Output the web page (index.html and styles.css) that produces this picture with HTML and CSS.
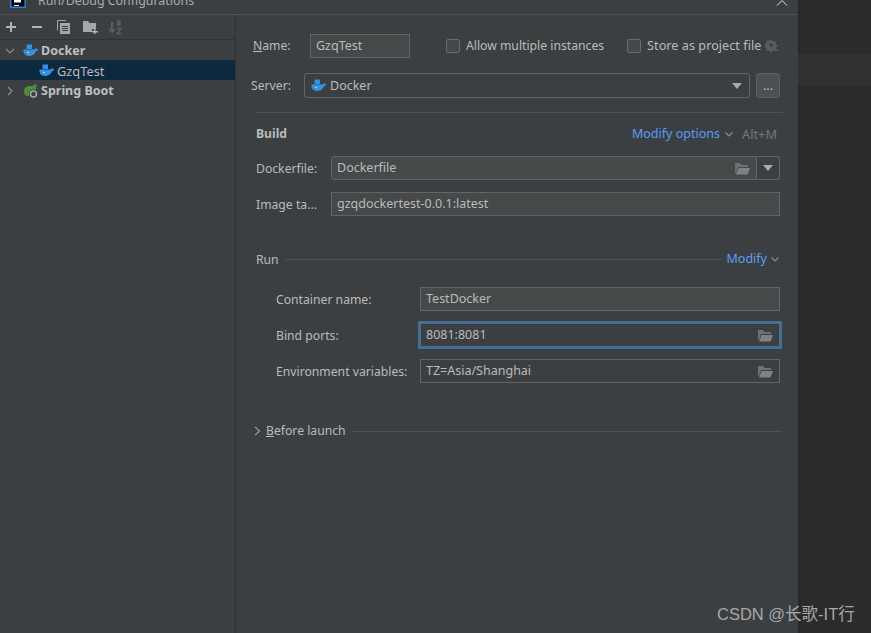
FILE: index.html
```html
<!DOCTYPE html>
<html lang="en">
<head>
<meta charset="utf-8">
<title>Run/Debug Configurations</title>
<link rel="stylesheet" href="styles.css">
</head>
<body>
<svg class="defs" width="0" height="0">
  <symbol id="docker" viewBox="0 0 16 16">
    <path fill="#3592e0" d="M3.500 1.500H9v4.500H3.500z"/>
    <path fill="#3592e0" d="M.5 6.500h11.200c.3-.9 1.100-1.300 1.800-1.100.2.500.5.900 2 .9-.4 1.300-1.300 1.800-2.500 1.800-.9 2.900-3.300 4.900-6.300 4.900C3 13 0 11 .5 6.500z"/>
    <circle cx="5" cy="9.500" r=".8" fill="#c9e2f6"/>
  </symbol>
  <symbol id="folder" viewBox="0 0 16 13">
    <path fill="#6e7072" d="M1 1h5l1.500 2H14v2H4L2 11H1z"/>
    <path fill="#7f8284" d="M4.500 6H16l-2.500 6.500H2z"/>
  </symbol>
</svg>
<div class="dialog">
  <header class="titlebar">
    <svg class="app-logo" width="16" height="8" viewBox="0 0 16 8"><path fill="#000" d="M0 0h16v8H0z"/><path fill="none" stroke="#2f80ed" stroke-width="1.500" d="M.8 0v7.300h14.400V0"/><path fill="#fff" d="M4 0h7v2.500H4zM4 5h5v1H4z"/></svg>
    <span class="title">Run/Debug Configurations</span>
    <svg class="close" width="12" height="6" viewBox="0 0 12 6"><path fill="none" stroke="#e6e6e6" d="M1 5.500 6 .5l5 5"/></svg>
  </header>
  <div class="main">
    <aside class="sidebar">
      <div class="toolbar">
        <svg class="tool tool-add" width="12" height="12" viewBox="0 0 12 12"><path fill="#b0b2b4" d="M5 1h2v4h4v2H7v4H5V7H1V5h4z"/></svg>
        <svg class="tool tool-add" width="12" height="12" viewBox="0 0 12 12"><path fill="#b0b2b4" d="M1 5h10v2H1z"/></svg>
        <svg class="tool" width="13" height="14" viewBox="0 0 13 14"><path fill="none" stroke="#a4a6a8" d="M9 .5H.5v10"/><path fill="#a4a6a8" d="M3 3h10v11H3z"/><path fill="#3c3f41" d="M5 6h6v1H5zM5 8h6v1H5zM5 10h6v1H5z"/></svg>
        <svg class="tool tool-folder" width="15" height="14" viewBox="0 0 15 14"><path fill="#a4a6a8" d="M0 1h5l1.500 2H13v6H9v3H0z"/><path fill="#b0b2b4" d="M11 9h1.500v2H15v1.500h-2.500V14H11v-1.500H9V11h2z"/></svg>
        <svg class="tool" width="14" height="15" viewBox="0 0 14 15"><path fill="#5c5f61" d="M3 2h2v8l2-2v2l-3 3.500L1 10V8l2 2z"/><path fill="none" stroke="#5c5f61" stroke-width="1.300" d="M9 1h3v4H9.500V3H12M9 8.500h4L9 13.500h4"/></svg>
      </div>
      <ul class="tree">
        <li class="node">
          <svg class="arrow" width="10" height="10" viewBox="0 0 10 10"><path fill="none" stroke="#8b8d8f" stroke-width="1.200" d="M1 3l4 4 4-4"/></svg>
          <svg class="node-icon" width="16" height="16"><use href="#docker"/></svg>
          <span class="node-bold">Docker</span>
        </li>
        <li class="node selected">
          <svg class="node-icon" width="16" height="16"><use href="#docker"/></svg>
          <span class="node-name">GzqTest</span>
        </li>
        <li class="node">
          <svg class="arrow" width="10" height="10" viewBox="0 0 10 10"><path fill="none" stroke="#8b8d8f" stroke-width="1.200" d="M3 1l4 4-4 4"/></svg>
          <svg class="node-icon" width="16" height="16" viewBox="0 0 16 16"><path fill="#4e8b3a" d="M1 8c0-3 2.500-5 6-5 2.500 0 4-.5 6-2.500 1 3 .5 6-1 8L6 13H3C1.800 12 1 10 1 8z"/><circle cx="10.500" cy="11" r="4.500" fill="#3c3f41"/><circle cx="10.500" cy="11" r="3" fill="none" stroke="#a8aaac" stroke-width="1.500"/></svg>
          <span class="node-bold">Spring Boot</span>
        </li>
      </ul>
    </aside>
    <section class="config">
      <div class="row row-name">
        <label class="lbl lbl-name"><u>N</u>ame:</label>
        <div class="field name-field">GzqTest</div>
        <label class="check check-multi"><span class="box"></span>Allow multiple instances</label>
        <label class="check check-store"><span class="box"></span>Store as project file</label>
        <svg class="gear" width="16" height="16" viewBox="0 0 16 16"><path transform="translate(0 1) scale(.75)" fill="#5a5d5f" fill-rule="evenodd" d="M6.500 1h3l.4 2 1.300.6 1.800-1.100 2 2-1.100 1.800.6 1.300 2 .4v2.800l-2 .4-.6 1.300 1.100 1.800-2 2-1.800-1.100-1.300.6-.4 2h-3l-.4-2-1.300-.6-1.800 1.100-2-2 1.100-1.800-.6-1.300-2-.4V6.800l2-.4.6-1.300L2 3.300l2-2 1.800 1.100L7.100 3zM8 5.500a2.500 2.500 0 1 0 0 5 2.500 2.500 0 0 0 0-5z"/><path fill="#5a5d5f" d="M9 11.500h5l-2.500 2z"/></svg>
      </div>
      <div class="row row-server">
        <label class="lbl lbl-server">Server:</label>
        <div class="combo">
          <svg class="combo-icon" width="16" height="16"><use href="#docker"/></svg>
          <span class="grow">Docker</span>
          <span class="caret"></span>
        </div>
        <div class="more">...</div>
      </div>
      <div class="divider"></div>
      <div class="head head-build">
        <span class="strong grow">Build</span>
        <a class="link">Modify options</a>
        <svg class="chev" width="8" height="5" viewBox="0 0 8 5"><path fill="none" stroke="#8b8d8f" stroke-width="1.200" d="M.5.500 4 4 7.500.500"/></svg>
        <span class="hint">Alt+M</span>
      </div>
      <div class="row row-docker">
        <label class="lbl lbl-build">Dockerfile:</label>
        <div class="split">
          <div class="field split-main rounded-left"><span class="grow">Dockerfile</span><svg class="folder" width="16" height="13"><use href="#folder"/></svg></div>
          <div class="split-btn"><span class="caret"></span></div>
        </div>
      </div>
      <div class="row row-tag">
        <label class="lbl lbl-build">Image ta...</label>
        <div class="field grow">gzqdockertest-0.0.1:latest</div>
      </div>
      <div class="head head-run">
        <span class="run-label">Run</span>
        <span class="rule"></span>
        <a class="link">Modify</a>
        <svg class="chev chev-run" width="8" height="5" viewBox="0 0 8 5"><path fill="none" stroke="#8b8d8f" stroke-width="1.200" d="M.5.500 4 4 7.500.500"/></svg>
      </div>
      <div class="row row-run row-container">
        <label class="lbl lbl-run">Container name:</label>
        <div class="field grow">TestDocker</div>
      </div>
      <div class="row row-run">
        <label class="lbl lbl-run">Bind ports:</label>
        <div class="field grow focused"><span class="grow">8081:8081</span><svg class="folder" width="16" height="13"><use href="#folder"/></svg></div>
      </div>
      <div class="row row-run">
        <label class="lbl lbl-run">Environment variables:</label>
        <div class="field grow plain"><span class="grow">TZ=Asia/Shanghai</span><svg class="folder" width="16" height="13"><use href="#folder"/></svg></div>
      </div>
      <div class="head head-before">
        <svg class="before-arrow" width="7" height="10" viewBox="0 0 7 10"><path fill="none" stroke="#a0a2a4" stroke-width="1.100" d="M1 .8 5.500 5 1 9.200"/></svg>
        <span class="before-label"><u>B</u>efore launch</span>
        <span class="rule"></span>
      </div>
    </section>
  </div>
</div>
<div class="backdrop"><div class="band"></div></div>
<div class="watermark">CSDN @长歌-IT行</div>
</body>
</html>
```
FILE: styles.css
```css
* { box-sizing: border-box; }
html, body { height: 100%; }
body {
  margin: 0;
  display: flex;
  overflow: hidden;
  background: #2b2b2b;
  color: #bbbbbb;
  font-family: "Noto Sans", "Noto Sans CJK SC", sans-serif;
  font-size: 12.5px;
  line-height: 16px;
}
.defs { position: absolute; }
.dialog {
  width: 798px;
  height: 633px;
  flex: none;
  display: flex;
  flex-direction: column;
  background: #3c3f41;
  box-shadow: 1px 0 2px #262626;
}
.titlebar {
  height: 15px;
  flex: none;
  display: flex;
  align-items: flex-end;
  overflow: hidden;
  border-bottom: 1px solid #515151;
  position: relative;
  padding-left: 10px;
}
.app-logo { position: absolute; left: 10px; top: 0; }
.title { margin-left: 28px; margin-bottom: 3px; line-height: 20px; font-size: 12.4px; color: #a9abad; }
.close { position: absolute; left: 776px; top: 0; }
.main { flex: 1; display: flex; min-height: 0; }
.sidebar { width: 236px; flex: none; border-right: 1px solid #323232; }
.toolbar {
  height: 25px;
  display: flex;
  align-items: center;
  padding-left: 5px;
  border-bottom: 1px solid #323232;
}
.tool { margin-right: 13px; }
.tool-add { margin-right: 14px; }
.tool-folder { margin-right: 10px; }
.tree { list-style: none; margin: 0; padding: 0; }
.node { height: 20px; display: flex; align-items: center; padding: 2px 0 0 5px; color: #bbbbbb; }
.arrow { margin-right: 8px; }
.node-icon { margin-right: 2px; }
.node-bold { font-weight: 700; color: #bdbfc1; }
.node-name { font-size: 12.8px; }
.selected { background: #0d293e; padding-left: 39px; }
.config { flex: 1; min-width: 0; padding: 19px 18px 0 15px; }
.row { display: flex; align-items: center; height: 24px; }
.lbl { flex: none; font-size: 12.2px; }
.lbl-name { width: 59px; padding-left: 2px; }
.lbl-server { width: 53px; }
.lbl-build { width: 80px; padding: 2px 0 0 5px; }
.lbl-run { width: 169px; padding: 2px 0 0 25px; }
.field {
  height: 24px;
  display: flex;
  align-items: center;
  padding: 0 5px;
  background: #45494a;
  border: 1px solid #646464;
  min-width: 0;
}
.plain, .focused { background: #3c3f41; }
.focused { border-color: #466d94; box-shadow: 0 0 0 2px #466d94; }
.grow { flex: 1; min-width: 0; }
.name-field { width: 100px; flex: none; padding-left: 5px; }
.check { display: flex; align-items: center; white-space: nowrap; font-size: 12.2px; flex: none; }
.box {
  width: 14px;
  height: 14px;
  margin-right: 6px;
  border: 1px solid #6b6b6b;
  border-radius: 2px;
  background: #43494a;
}
.check-multi { margin-left: 36px; }
.check-store { margin-left: 23px; font-size: 12.6px; letter-spacing: .05px; }
.gear { margin-left: 4px; flex: none; }
.row-server { height: 25px; margin-top: 15px; }
.combo {
  flex: 1;
  height: 25px;
  display: flex;
  align-items: center;
  padding: 0 7px 0 6px;
  border: 1px solid #646464;
  border-radius: 3px;
}
.combo-icon { margin-right: 3px; }
.caret {
  width: 0;
  height: 0;
  border-left: 5px solid transparent;
  border-right: 5px solid transparent;
  border-top: 6px solid #a8aaac;
}
.more {
  width: 24px;
  height: 25px;
  margin-left: 6px;
  display: flex;
  align-items: center;
  justify-content: center;
  background: #4c5052;
  border: 1px solid #5e6060;
  border-radius: 3px;
  flex: none;
}
.divider { height: 1px; background: #515151; margin: 14px -3px 0 5px; }
.head { display: flex; align-items: center; height: 20px; padding-left: 5px; }
.head-build { margin-top: 10px; padding: 2px 3px 0 5px; }
.strong { font-weight: 700; font-size: 12.2px; }
.link { color: #589df6; }
.chev { margin-left: 5px; }
.hint { margin-left: 9px; color: #787878; font-size: 12.8px; }
.row-docker { margin-top: 13px; }
.row-tag { margin-top: 12px; }
.split { flex: 1; display: flex; height: 24px; min-width: 0; }
.split-main { flex: 1; }
.rounded-left { border-radius: 3px 0 0 3px; }
.folder { flex: none; margin-right: 1px; }
.split-btn {
  width: 23px;
  flex: none;
  display: flex;
  align-items: center;
  justify-content: center;
  border: 1px solid #646464;
  border-left: 0;
  border-radius: 0 3px 3px 0;
}
.head-run { margin-top: 33px; }
.run-label { padding-top: 2px; font-size: 12.2px; }
.rule { flex: 1; height: 1px; background: #515151; margin: 0 6px; }
.chev-run { margin-left: 4px; margin-right: 1px; }
.row-run { margin-top: 12px; }
.row-container { margin-top: 18px; }
.head-before { margin-top: 38px; padding-left: 3px; margin-right: -2px; }
.before-arrow { margin-right: 5px; }
.before-label { font-size: 12.2px; }
.head-before .rule { margin-right: 0; }
.backdrop { flex: 1; }
.band { height: 32px; margin-top: 54px; background: #313131; }
.watermark {
  position: absolute;
  left: 717px;
  top: 604px;
  font-size: 16.5px;
  line-height: 20px;
  color: #a8a8a8;
  font-family: "Liberation Sans", "Noto Sans CJK SC", sans-serif;
}
```
